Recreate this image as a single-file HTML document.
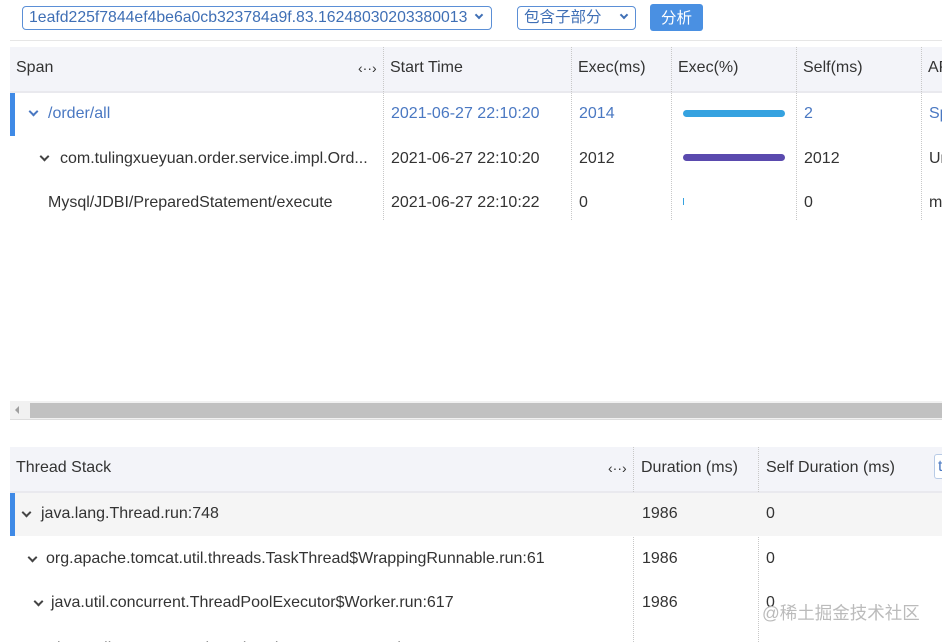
<!DOCTYPE html>
<html><head><meta charset="utf-8"><style>
*{margin:0;padding:0;box-sizing:border-box}
html,body{width:942px;height:642px;overflow:hidden}
body{background:#fff;font-family:"Liberation Sans","Noto Sans CJK SC",sans-serif;font-size:16px;color:#333;position:relative}
.a{position:absolute;white-space:nowrap}
.t{position:absolute;white-space:nowrap;line-height:20px;transform:translateY(-9px)}
.sel{position:absolute;border:1px solid #5b8fd6;border-radius:4px;height:24px;color:#3f6fb5;line-height:22px;padding-left:6px;font-size:15.8px}
.hd{position:absolute;background:#f3f4f9;border-bottom:2px solid #e9e9ee}
.vl{position:absolute;width:0;border-left:1px dotted #c8c8c8}
.blue{color:#4a78c2}
.chev{position:absolute;width:7px;height:7px;border-right:2px solid #444;border-bottom:2px solid #444;transform:rotate(45deg)}
.bar{position:absolute;height:7px;border-radius:3.5px}
</style></head><body>
<div class="sel" style="left:22px;top:6px;width:470px">1eafd225f7844ef4be6a0cb323784a9f.83.16248030203380013</div>
<div class="chev" style="left:476px;top:12px;border-color:#3f6fb5;width:6px;height:6px"></div>
<div class="sel" style="left:517px;top:6px;width:119px;font-size:15.5px">包含子部分</div>
<div class="chev" style="left:621px;top:12px;border-color:#3f6fb5;width:6px;height:6px"></div>
<div class="a" style="left:650px;top:4px;width:53px;height:27px;background:#4a90e2;border-radius:3px;color:#fff;text-align:center;line-height:29px;font-size:15.5px">分析</div>
<div class="a" style="left:10px;top:40px;width:932px;height:1px;background:#e6e6e6"></div>

<div class="hd" style="left:10px;top:47px;width:932px;height:46px"></div>
<div class="t" style="left:16px;top:67px">Span</div>
<div class="t" style="left:358px;top:67px;font-size:14px">‹··›</div>
<div class="t" style="left:390px;top:67px">Start Time</div>
<div class="t" style="left:578px;top:67px">Exec(ms)</div>
<div class="t" style="left:678px;top:67px">Exec(%)</div>
<div class="t" style="left:803px;top:67px">Self(ms)</div>
<div class="t" style="left:928px;top:67px">AP</div>
<div class="vl" style="left:383px;top:47px;height:173px"></div>
<div class="vl" style="left:571px;top:47px;height:173px"></div>
<div class="vl" style="left:671px;top:47px;height:173px"></div>
<div class="vl" style="left:796px;top:47px;height:173px"></div>
<div class="vl" style="left:921px;top:47px;height:173px"></div>

<div class="a" style="left:10px;top:93px;width:5px;height:43px;background:#3f8ae6"></div>
<div class="chev" style="left:30px;top:108px;border-color:#4a78c2"></div>
<div class="t blue" style="left:48px;top:113px">/order/all</div>
<div class="t blue" style="left:391px;top:113px">2021-06-27 22:10:20</div>
<div class="t blue" style="left:579px;top:113px">2014</div>
<div class="bar" style="left:683px;top:110px;width:102px;background:#35a2e0"></div>
<div class="t blue" style="left:804px;top:113px">2</div>
<div class="t blue" style="left:929px;top:113px">Sp</div>

<div class="chev" style="left:41px;top:153px"></div>
<div class="t" style="left:60px;top:158px">com.tulingxueyuan.order.service.impl.Ord...</div>
<div class="t" style="left:391px;top:158px">2021-06-27 22:10:20</div>
<div class="t" style="left:579px;top:158px">2012</div>
<div class="bar" style="left:683px;top:154px;width:102px;background:#5a4aae"></div>
<div class="t" style="left:804px;top:158px">2012</div>
<div class="t" style="left:929px;top:158px">Ur</div>

<div class="t" style="left:48px;top:202px">Mysql/JDBI/PreparedStatement/execute</div>
<div class="t" style="left:391px;top:202px">2021-06-27 22:10:22</div>
<div class="t" style="left:579px;top:202px">0</div>
<div class="a" style="left:683px;top:198px;width:1px;height:7px;background:#35a2e0"></div>
<div class="t" style="left:804px;top:202px">0</div>
<div class="t" style="left:929px;top:202px">m</div>

<div class="a" style="left:10px;top:401px;width:932px;height:19px;background:#f1f1f1;border-bottom:1px solid #ddd"></div>
<div class="a" style="left:30px;top:403px;width:912px;height:15px;background:#c1c1c1"></div>
<div class="a" style="left:15px;top:406px;width:0;height:0;border-top:4px solid transparent;border-bottom:4px solid transparent;border-right:4px solid #a0a0a0"></div>

<div class="hd" style="left:10px;top:447px;width:932px;height:46px"></div>
<div class="t" style="left:16px;top:467px">Thread Stack</div>
<div class="t" style="left:608px;top:467px;font-size:14px">‹··›</div>
<div class="t" style="left:641px;top:467px">Duration (ms)</div>
<div class="t" style="left:766px;top:467px">Self Duration (ms)</div>
<div class="a" style="left:934px;top:454px;width:12px;height:25px;border:1px solid #b8cbe6;border-radius:3px;background:#fff;color:#4a78c2;line-height:23px;padding-left:3px">t</div>
<div class="vl" style="left:633px;top:447px;height:195px"></div>
<div class="vl" style="left:758px;top:447px;height:195px"></div>

<div class="a" style="left:10px;top:493px;width:932px;height:43px;background:#f5f5f5"></div>
<div class="a" style="left:10px;top:493px;width:5px;height:43px;background:#3f8ae6"></div>
<div class="chev" style="left:23px;top:509px"></div>
<div class="t" style="left:41px;top:513px">java.lang.Thread.run:748</div>
<div class="t" style="left:642px;top:513px">1986</div>
<div class="t" style="left:766px;top:513px">0</div>

<div class="chev" style="left:29px;top:554px"></div>
<div class="t" style="left:46px;top:558px">org.apache.tomcat.util.threads.TaskThread$WrappingRunnable.run:61</div>
<div class="t" style="left:642px;top:558px">1986</div>
<div class="t" style="left:766px;top:558px">0</div>

<div class="chev" style="left:35px;top:598px"></div>
<div class="t" style="left:51px;top:602px">java.util.concurrent.ThreadPoolExecutor$Worker.run:617</div>
<div class="t" style="left:642px;top:602px">1986</div>
<div class="t" style="left:766px;top:602px">0</div>
<div class="t" style="left:762px;top:612px;color:#bbb;font-size:17.5px">@稀土掘金技术社区</div>

<div class="t" style="left:57px;top:648px">java.util.concurrent.ThreadPoolExecutor.runWorker:1149</div>
<div class="t" style="left:642px;top:648px">1986</div>
<div class="t" style="left:766px;top:648px">0</div>
</body></html>
